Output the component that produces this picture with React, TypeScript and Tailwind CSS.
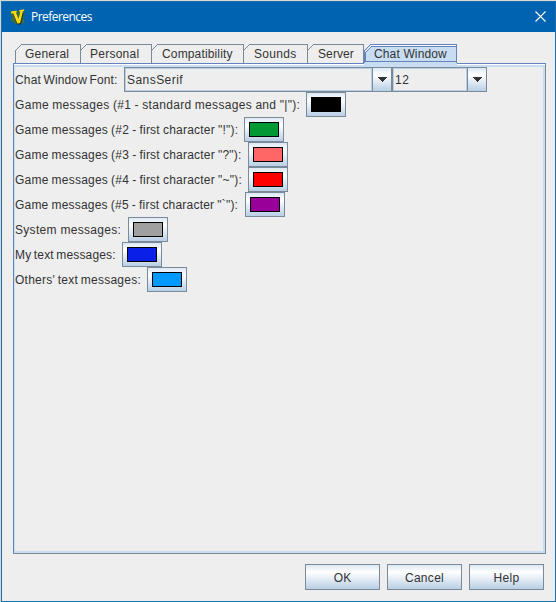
const tabs = [
  { label: "General", box: "w-[66px] pl-[10px]", track: "tracking-[0.22px]" },
  { label: "Personal", box: "w-[71px] pl-[9px]", track: "tracking-[0.24px]" },
  { label: "Compatibility", box: "w-[92px] pl-[10px]", track: "tracking-[0.15px]" },
  { label: "Sounds", box: "w-[64px] pl-[10px]", track: "tracking-[0.3px]" },
  { label: "Server", box: "w-[56px] pl-[10px]", track: "tracking-[0.1px]" },
];

const rows = [
  { label: 'Game messages (#1 - standard messages and "|"):', width: "w-[291px]", track: "tracking-[0.31px] [word-spacing:-0.25px]", color: "bg-black" },
  { label: 'Game messages (#2 - first character "!"):', width: "w-[229px]", track: "tracking-[0.22px] [word-spacing:-0.5px]", color: "bg-[#009933]" },
  { label: 'Game messages (#3 - first character "?"):', width: "w-[233px]", track: "tracking-[0.22px] [word-spacing:-0.5px]", color: "bg-[#ff6666]" },
  { label: 'Game messages (#4 - first character "~"):', width: "w-[233px]", track: "tracking-[0.22px] [word-spacing:-0.5px]", color: "bg-[#ff0000]" },
  { label: 'Game messages (#5 - first character "`"):', width: "w-[230px]", track: "tracking-[0.2px] [word-spacing:-0.5px]", color: "bg-[#990099]" },
  { label: "System messages:", width: "w-[113px]", track: "tracking-[0.3px]", color: "bg-[#a0a0a0]" },
  { label: "My text messages:", width: "w-[107px]", track: "tracking-[0.16px] [word-spacing:-1px]", color: "bg-[#0a20e6]" },
  { label: "Others' text messages:", width: "w-[132px]", track: "tracking-[0.26px] [word-spacing:-1px]", color: "bg-[#0099ff]" },
];

const metal = "border border-[#7a8a99] bg-[linear-gradient(#dde8f3_0%,#ffffff_30%,#b8cfe5_100%)]";

function ArrowButton() {
  return (
    <button className={`flex h-[25px] w-5 items-center justify-center ${metal}`}>
      <svg width="10" height="5" shapeRendering="crispEdges">
        <path d="M0 0H10L5 5Z" fill="#333" />
      </svg>
    </button>
  );
}

function Combo({ value, width, track }: { value: string; width: string; track: string }) {
  return (
    <div className="flex">
      <div className={`h-[25px] border border-r-0 border-[#7a8a99] ${width}`}>
        <div className={`h-[23px] border border-[#b8cfe5] pl-px leading-[23px] ${track}`}>{value}</div>
      </div>
      <ArrowButton />
    </div>
  );
}

export default function App() {
  return (
    <div className="h-[602px] w-[556px] overflow-hidden bg-[#d8d8d8] pl-px pt-px font-['Liberation_Sans',Arial,sans-serif] text-[12px] text-[#333]">
      <div className="flex h-[601px] w-[555px] flex-col border border-[#1a6fae] bg-[#eeeeee]">
        <header className="flex h-[30px] shrink-0 items-center bg-[#0063b1] pl-[8px] pr-[9px]">
          <svg width="16" height="16" viewBox="0 0 16 16">
            <path d="M3 2H12L14.5 4V7L13 9L14.5 11V13.5L11 15H6L2.5 13L1 11V9L2.5 8L0.5 6Z" fill="#3f6b45" />
            <path d="M3.6 4.5L7.6 15L10.6 14.6L13 4" fill="none" stroke="#1e3a30" strokeWidth="1.3" />
            <path d="M1 2.4L6.6 1.4V3.2L5.8 3.5L8.6 10L10.4 2.8L9.2 2.6V1.2L14.2 0.2V1.8L12.9 2.2L10 14L7.4 14.4L3.2 4.2L1 4.4Z" fill="#ffdd00" />
          </svg>
          <h1 className="ml-[5px] grow font-['Open_Sans','Noto_Sans',sans-serif] text-[12px] leading-4 tracking-[-0.55px] text-white">Preferences</h1>
          <svg className="relative -top-px" width="11" height="11" viewBox="0 0 11 11">
            <path d="M.5.5L10.5 10.5M10.5.5L.5 10.5" stroke="#fff" strokeWidth="1.1" />
          </svg>
        </header>

        <nav className="mt-[12px] flex h-[19px] shrink-0 pl-[13px]">
          {tabs.map((t, i) => (
            <button key={t.label} className={`relative h-[19px] text-left leading-[20px] ${t.box} ${t.track}`}>
              <span className="absolute inset-0 flex">
                <svg className={i === 0 ? "shrink-0" : "-ml-px shrink-0"} width="7" height="19" shapeRendering="crispEdges">
                  <path d="M0.5 19V6.5L6.5 0.5" fill="none" stroke="#7a8a99" />
                </svg>
                <span className="-ml-px h-full grow border-r border-t border-[#7a8a99]" />
              </span>
              <span className="relative">{t.label}</span>
            </button>
          ))}
          <button className="relative z-10 h-[22px] w-[93px] pl-[10px] text-left leading-[20px]">
            <svg className="absolute inset-0" width="93" height="22" shapeRendering="crispEdges">
              <path d="M0 22V7L7 0H93V22Z" fill="#c8ddf2" />
              <path d="M0 0H7L0 7Z" fill="#eeeeee" />
              <path d="M0.5 19V6.5L6.5 0.5H92.5V19" fill="none" stroke="#6382bf" />
              <path d="M1.5 18V7.5L7.5 1.5H92" fill="none" stroke="#fff" />
              <path d="M92 17.5H1.5V8.5L7.5 2.5H92" fill="none" stroke="#6382bf" />
            </svg>
            <span className="relative -top-px tracking-[0.14px]">Chat Window</span>
          </button>
        </nav>

        <main className="ml-[11px] h-[491px] w-[533px] shrink-0 border border-b-[#7a8a99] border-l-[#6382bf] border-r-[#7a8a99] border-t-[#6382bf]">
          <div className="h-[489px] border-t border-white">
            <div className="h-[488px] border-2 border-l-[1px] border-[#c8ddf2]">
              <div className="flex h-[25px]">
                <span className="w-[109px] whitespace-nowrap leading-[26px] tracking-[0.15px] [word-spacing:-1px]">Chat Window Font:</span>
                <Combo value="SansSerif" width="w-[248px]" track="tracking-[0.45px]" />
                <Combo value="12" width="w-[75px]" track="tracking-[0.5px]" />
              </div>
              {rows.map((r) => (
                <div key={r.label} className="flex h-[25px]">
                  <span className={`shrink-0 whitespace-nowrap leading-[26px] ${r.width} ${r.track}`}>{r.label}</span>
                  <button className={`flex h-[25px] w-10 items-center justify-center ${metal}`}>
                    <span className={`h-[15px] w-[30px] border border-black ${r.color}`} />
                  </button>
                </div>
              ))}
            </div>
          </div>
        </main>

        <footer className="mt-[10px] flex gap-[7px] pl-[303px]">
          <button className={`h-[26px] w-[75px] pt-px leading-[25px] ${metal}`}>OK</button>
          <button className={`h-[26px] w-[75px] pt-px leading-[25px] tracking-[0.3px] ${metal}`}>Cancel</button>
          <button className={`h-[26px] w-[75px] pt-px leading-[25px] tracking-[0.3px] ${metal}`}>Help</button>
        </footer>
      </div>
    </div>
  );
}
